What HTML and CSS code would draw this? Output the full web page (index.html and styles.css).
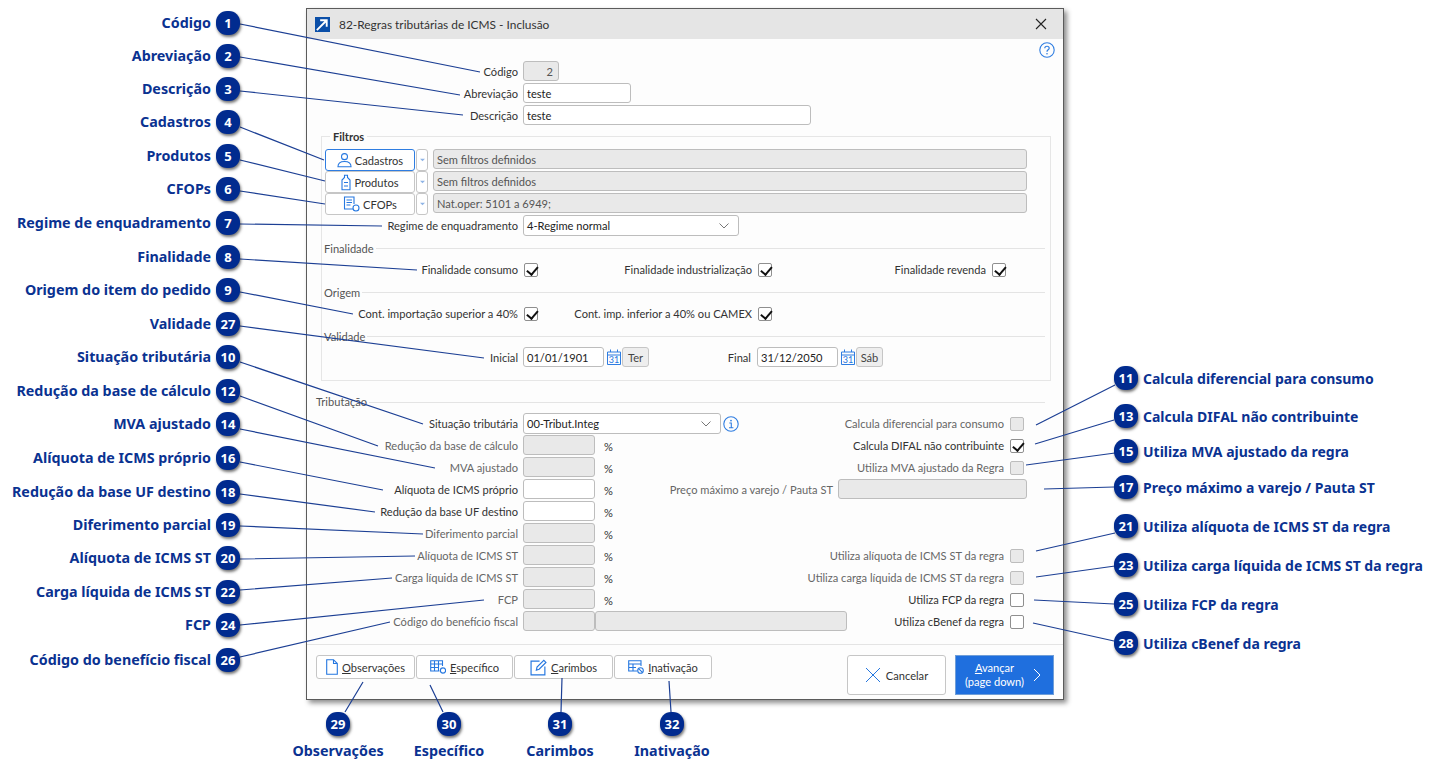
FILE: index.html
```html
<!DOCTYPE html>
<html lang="pt-BR">
<head>
<meta charset="utf-8">
<title>82-Regras tributárias de ICMS - Inclusão</title>
<link rel="stylesheet" href="styles.css">
</head>
<body>
<main class="canvas">
  <section class="dialog">
    <header class="titlebar">
      <svg class="app-icon" viewBox="0 0 16 16"><rect width="16" height="16" fill="#0b4fa8"/><path d="M2 14 L12 4 M5.5 3.5 H12.5 V10.5" fill="none" stroke="#fff" stroke-width="2"/></svg>
      <span class="title">82-Regras tributárias de ICMS - Inclusão</span>
      <svg class="close" viewBox="0 0 12 12"><path d="M1 1 L11 11 M11 1 L1 11" stroke="#222" stroke-width="1.1"/></svg>
    </header>
    <div class="body">
      <div class="help-row">
        <svg class="help" viewBox="0 0 16 16"><circle cx="8" cy="8" r="7.2" fill="none" stroke="#2f7de1" stroke-width="1.1"/><path d="M5.8 6.2 C5.8 3.6 10.2 3.6 10.2 6.2 C10.2 7.9 8 7.8 8 9.7" fill="none" stroke="#2f7de1" stroke-width="1.2"/><circle cx="8" cy="11.8" r=".8" fill="#2f7de1"/></svg>
      </div>
      <div class="row"><label class="lbl lbl-top">Código</label><span class="input disabled w-code num">2</span></div>
      <div class="row"><label class="lbl lbl-top">Abreviação</label><span class="input w-abbr">teste</span></div>
      <div class="row"><label class="lbl lbl-top">Descrição</label><span class="input w-desc">teste</span></div>

      <div class="group">
        <div class="group-title">Filtros</div>
        <div class="row filter">
          <button class="btn btn-filter focus"><svg class="ico ico-user" viewBox="0 0 16 16"><circle cx="8" cy="4.4" r="3.2"/><path d="M1 15.3 C1 10.6 4 9.6 8 9.6 C12 9.6 15 10.6 15 15.3 Z"/></svg>Cadastros</button>
          <button class="btn-drop"><svg viewBox="0 0 6 4"><path d="M0 .5 H6 L3 3.5 Z" fill="#8fb4e6"/></svg></button>
          <span class="input disabled w-filter">Sem filtros definidos</span>
        </div>
        <div class="row filter">
          <button class="btn btn-filter"><svg class="ico ico-bottle" viewBox="0 0 10 16"><path d="M3.5 .7 H6.5 V3 L9 5.5 V15.3 H1 V5.5 L3.5 3 Z M3 8 H7 M3 11.5 H7"/></svg>Produtos</button>
          <button class="btn-drop"><svg viewBox="0 0 6 4"><path d="M0 .5 H6 L3 3.5 Z" fill="#8fb4e6"/></svg></button>
          <span class="input disabled w-filter">Sem filtros definidos</span>
        </div>
        <div class="row filter">
          <button class="btn btn-filter"><svg class="ico ico-doc" viewBox="0 0 16 16"><path d="M9.5 13 H1 V1 H10.5 V8 M3 4 H8.5 M3 6.5 H8.5 M3 9 H7"/><circle cx="12.5" cy="12" r="3"/></svg>CFOPs</button>
          <button class="btn-drop"><svg viewBox="0 0 6 4"><path d="M0 .5 H6 L3 3.5 Z" fill="#8fb4e6"/></svg></button>
          <span class="input disabled w-filter">Nat.oper: 5101 a 6949;</span>
        </div>
        <div class="row">
          <label class="lbl lbl-group">Regime de enquadramento</label>
          <span class="input select w-regime">4-Regime normal<svg class="chev" viewBox="0 0 10 6"><path d="M.5 .5 L5 5 L9.5 .5"/></svg></span>
        </div>
        <div class="section">Finalidade</div>
        <div class="row">
          <div class="cell cell-first"><label>Finalidade consumo</label><span class="check on"></span></div>
          <div class="cell"><label>Finalidade industrialização</label><span class="check on"></span></div>
          <div class="cell"><label>Finalidade revenda</label><span class="check on"></span></div>
        </div>
        <div class="section">Origem</div>
        <div class="row">
          <div class="cell cell-first"><label>Cont. importação superior a 40%</label><span class="check on"></span></div>
          <div class="cell"><label>Cont. imp. inferior a 40% ou CAMEX</label><span class="check on"></span></div>
        </div>
        <div class="section">Validade</div>
        <div class="row">
          <label class="lbl lbl-group">Inicial</label>
          <span class="input w-date">01/01/1901</span>
          <svg class="cal" viewBox="0 0 14 16"><path d="M.5 3 H13.5 V15.5 H.5 Z M.5 6 H13.5 M3.5 .5 V3 M10.5 .5 V3" fill="none" stroke="#2f7de1"/><text x="7" y="14" text-anchor="middle" class="cal-num">31</text></svg>
          <span class="weekday">Ter</span>
          <label class="lbl-final">Final</label>
          <span class="input w-date">31/12/2050</span>
          <svg class="cal" viewBox="0 0 14 16"><path d="M.5 3 H13.5 V15.5 H.5 Z M.5 6 H13.5 M3.5 .5 V3 M10.5 .5 V3" fill="none" stroke="#2f7de1"/><text x="7" y="14" text-anchor="middle" class="cal-num">31</text></svg>
          <span class="weekday">Sáb</span>
        </div>
      </div>

      <div class="section section-tax">Tributação</div>
      <div class="tax">
        <div class="row">
          <label class="lbl">Situação tributária</label>
          <span class="input select w-sit">00-Tribut.Integ<svg class="chev" viewBox="0 0 10 6"><path d="M.5 .5 L5 5 L9.5 .5"/></svg></span>
          <svg class="info" viewBox="0 0 16 16"><circle cx="8" cy="8" r="7.2" fill="none" stroke="#2f7de1" stroke-width="1.1"/><path d="M6.3 7 H8.3 V11.6 M6 11.8 H10.4" fill="none" stroke="#2f7de1" stroke-width="1.1"/><circle cx="8" cy="4.6" r=".9" fill="#2f7de1"/></svg>
          <div class="right"><label class="muted">Calcula diferencial para consumo</label><span class="check off"></span></div>
        </div>
        <div class="row">
          <label class="lbl muted">Redução da base de cálculo</label><span class="input disabled w-pct"></span><span class="pct">%</span>
          <div class="right"><label>Calcula DIFAL não contribuinte</label><span class="check on"></span></div>
        </div>
        <div class="row">
          <label class="lbl muted">MVA ajustado</label><span class="input disabled w-pct"></span><span class="pct">%</span>
          <div class="right"><label class="muted">Utiliza MVA ajustado da Regra</label><span class="check off"></span></div>
        </div>
        <div class="row">
          <label class="lbl">Alíquota de ICMS próprio</label><span class="input w-pct"></span><span class="pct">%</span>
          <div class="right right-field"><label class="muted">Preço máximo a varejo / Pauta ST</label><span class="input disabled w-max"></span></div>
        </div>
        <div class="row">
          <label class="lbl">Redução da base UF destino</label><span class="input w-pct"></span><span class="pct">%</span>
        </div>
        <div class="row">
          <label class="lbl muted">Diferimento parcial</label><span class="input disabled w-pct"></span><span class="pct">%</span>
        </div>
        <div class="row">
          <label class="lbl muted">Alíquota de ICMS ST</label><span class="input disabled w-pct"></span><span class="pct">%</span>
          <div class="right"><label class="muted">Utiliza alíquota de ICMS ST da regra</label><span class="check off"></span></div>
        </div>
        <div class="row">
          <label class="lbl muted">Carga líquida de ICMS ST</label><span class="input disabled w-pct"></span><span class="pct">%</span>
          <div class="right"><label class="muted">Utiliza carga líquida de ICMS ST da regra</label><span class="check off"></span></div>
        </div>
        <div class="row">
          <label class="lbl muted">FCP</label><span class="input disabled w-pct"></span><span class="pct">%</span>
          <div class="right"><label>Utiliza FCP da regra</label><span class="check"></span></div>
        </div>
        <div class="row">
          <label class="lbl muted">Código do benefício fiscal</label><span class="input disabled w-ben1"></span><span class="input disabled w-ben2"></span>
          <div class="right"><label>Utiliza cBenef da regra</label><span class="check"></span></div>
        </div>
      </div>
    </div>
    <footer class="footer">
      <button class="btn btn-foot w-obs"><svg class="ico ico-foot" viewBox="0 0 12 16"><path d="M.7 .7 H7.5 L11.3 4.5 V15.3 H.7 Z M7.5 .7 V4.5 H11.3"/></svg><span><u>O</u>bservações</span></button>
      <button class="btn btn-foot w-esp"><svg class="ico ico-foot2" viewBox="0 0 16 14"><path d="M9.5 11 H.7 V.7 H12.5 V6 M.7 4 H12.5 M.7 7.5 H9 M4.5 .7 V11 M8.5 .7 V11"/><circle cx="13" cy="10.5" r="2.6"/></svg><span><u>E</u>specífico</span></button>
      <button class="btn btn-foot w-car"><svg class="ico ico-foot3" viewBox="0 0 16 16"><path d="M9 2 H1 V15 H14 V7"/><path d="M6 10.5 L6.6 7.6 L13 1.2 L15 3.2 L8.6 9.6 Z"/></svg><span><u>C</u>arimbos</span></button>
      <button class="btn btn-foot w-ina"><svg class="ico ico-foot2" viewBox="0 0 16 14"><path d="M9 11 H.7 V.7 H13 V6 M.7 4 H13 M.7 7.5 H8 M5 4 V11"/><circle cx="12.5" cy="10.5" r="2.8"/><path d="M10.6 8.6 L14.4 12.4"/></svg><span><u>I</u>nativação</span></button>
      <div class="footer-spacer"></div>
      <button class="btn btn-cancel"><svg class="ico-x" viewBox="0 0 16 16"><path d="M1 1 L15 15 M15 1 L1 15"/></svg>Cancelar</button>
      <button class="btn-next"><span class="next-text"><span><u>A</u>vançar</span><span>(page down)</span></span><svg class="ico-next" viewBox="0 0 8 14"><path d="M1 1 L7 7 L1 13"/></svg></button>
    </footer>
  </section>

  <svg class="leaders" viewBox="0 0 1439 778">
    <path d="M240 24 L480 72 M240 57 L460 95 M240 91 L463 115 M240 127 L324 160 M240 160 L325 181 M240 191 L325 204 M240 224 L382 226 M240 259 L417 270 M240 292 L353 314 M240 326 L484 358 M240 362 L423 424 M240 396 L378 446 M240 429 L435 468 M240 462 L383 490 M240 494 L375 512 M240 526 L423 534 M240 559 L415 556 M240 590 L392 578 M240 625 L484 600 M240 657 L390 622"/>
    <path d="M1115 385 L1036 425 M1114 420 L1035 444 M1115 453 L1026 465 M1114 487 L1044 489 M1115 533 L1036 551 M1115 566 L1036 577 M1114 604 L1034 600 M1114 641 L1033 623"/>
    <path d="M345 712 L363 682 M443 712 L430 685 M561 712 L562 678 M671 712 L669 681"/>
  </svg>

  <div class="co co-l y23"><span class="co-t">Código</span><b class="pin">1</b></div>
  <div class="co co-l y56"><span class="co-t">Abreviação</span><b class="pin">2</b></div>
  <div class="co co-l y89"><span class="co-t">Descrição</span><b class="pin">3</b></div>
  <div class="co co-l y122"><span class="co-t">Cadastros</span><b class="pin">4</b></div>
  <div class="co co-l y156"><span class="co-t">Produtos</span><b class="pin">5</b></div>
  <div class="co co-l y189"><span class="co-t">CFOPs</span><b class="pin">6</b></div>
  <div class="co co-l y223"><span class="co-t">Regime de enquadramento</span><b class="pin">7</b></div>
  <div class="co co-l y257"><span class="co-t">Finalidade</span><b class="pin">8</b></div>
  <div class="co co-l y290"><span class="co-t">Origem do item do pedido</span><b class="pin">9</b></div>
  <div class="co co-l y324"><span class="co-t">Validade</span><b class="pin">27</b></div>
  <div class="co co-l y357"><span class="co-t">Situação tributária</span><b class="pin">10</b></div>
  <div class="co co-l y391"><span class="co-t">Redução da base de cálculo</span><b class="pin">12</b></div>
  <div class="co co-l y424"><span class="co-t">MVA ajustado</span><b class="pin">14</b></div>
  <div class="co co-l y458"><span class="co-t">Alíquota de ICMS próprio</span><b class="pin">16</b></div>
  <div class="co co-l y492"><span class="co-t">Redução da base UF destino</span><b class="pin">18</b></div>
  <div class="co co-l y525"><span class="co-t">Diferimento parcial</span><b class="pin">19</b></div>
  <div class="co co-l y558"><span class="co-t">Alíquota de ICMS ST</span><b class="pin">20</b></div>
  <div class="co co-l y592"><span class="co-t">Carga líquida de ICMS ST</span><b class="pin">22</b></div>
  <div class="co co-l y625"><span class="co-t">FCP</span><b class="pin">24</b></div>
  <div class="co co-l y660"><span class="co-t">Código do benefício fiscal</span><b class="pin">26</b></div>

  <div class="co co-r y378"><b class="pin">11</b><span class="co-t">Calcula diferencial para consumo</span></div>
  <div class="co co-r y416"><b class="pin">13</b><span class="co-t">Calcula DIFAL não contribuinte</span></div>
  <div class="co co-r y451"><b class="pin">15</b><span class="co-t">Utiliza MVA ajustado da regra</span></div>
  <div class="co co-r y487"><b class="pin">17</b><span class="co-t">Preço máximo a varejo / Pauta ST</span></div>
  <div class="co co-r y526"><b class="pin">21</b><span class="co-t">Utiliza alíquota de ICMS ST da regra</span></div>
  <div class="co co-r y565"><b class="pin">23</b><span class="co-t">Utiliza carga líquida de ICMS ST da regra</span></div>
  <div class="co co-r y604"><b class="pin">25</b><span class="co-t">Utiliza FCP da regra</span></div>
  <div class="co co-r y643"><b class="pin">28</b><span class="co-t">Utiliza cBenef da regra</span></div>

  <div class="co-b x338"><b class="pin">29</b><span class="co-t">Observações</span></div>
  <div class="co-b x449"><b class="pin">30</b><span class="co-t">Específico</span></div>
  <div class="co-b x560"><b class="pin">31</b><span class="co-t">Carimbos</span></div>
  <div class="co-b x672"><b class="pin">32</b><span class="co-t">Inativação</span></div>
</main>
</body>
</html>
```
FILE: styles.css
```css
* { box-sizing: border-box; }
html, body { margin: 0; padding: 0; background: #fff; }
body { font-family: "Lato", "Noto Sans", sans-serif; font-size: 11.1px; color: #333; overflow: hidden; }
.canvas { position: relative; width: 1439px; height: 778px; overflow: hidden; }

/* Dialog window */
.dialog { position: absolute; left: 306px; top: 8px; width: 758px; height: 692px; background: #fdfdfd; border: 1px solid #5b5b5b; display: flex; flex-direction: column; box-shadow: 3px 3px 5px rgba(0,0,0,.45); }
.titlebar { height: 30px; flex: none; background: #e5e5e5; display: flex; align-items: center; padding: 0 16px 0 8px; }
.app-icon { width: 15px; height: 15px; margin-right: 9px; }
.title { font-size: 11.9px; color: #333; flex: 1; }
.close { width: 12px; height: 12px; margin-top: -1px; }
.body { flex: 1; position: relative; padding: 0 0 0 9px; }
.help-row { height: 22px; display: flex; justify-content: flex-end; padding: 3px 8px 0 0; }
.help { width: 16px; height: 16px; }

/* Rows and labels */
.row { height: 22px; display: flex; align-items: flex-start; }
label { white-space: nowrap; line-height: 21px; }
.lbl { width: 202px; margin-right: 5px; text-align: right; flex: none; }
.lbl-group { width: 193px; }
.muted { color: #666; }
.input { display: block; height: 20px; line-height: 19px; border: 1px solid #bdbdbd; border-radius: 3px; background: #fff; padding: 0 3px; color: #222; flex: none; white-space: nowrap; position: relative; }
.input.disabled { background: #e9e9e9; color: #555; }
.num { text-align: right; padding-right: 5px; }
.w-code { width: 36px; }
.w-abbr { width: 108px; }
.w-desc { width: 288px; }
.w-filter { width: 594px; margin-left: 5px; }
.w-regime { width: 216px; height: 21px; }
.w-date { width: 81px; }
.w-sit { width: 198px; height: 21px; }
.w-pct { width: 72px; }
.w-max { width: 189px; }
.w-ben1 { width: 72px; }
.w-ben2 { width: 252px; }
.select { color: #222; line-height: 19px; }
.chev { position: absolute; right: 9px; top: 7px; width: 10px; height: 6px; fill: none; stroke: #777; }
.info { width: 16px; height: 16px; margin: 3px 0 0 2px; flex: none; }
.pct { width: 20px; margin-left: 4px; padding-left: 5px; line-height: 23px; flex: none; }

/* Filter group */
.group { width: 730px; height: 245px; margin: 9px 0 0 5px; border: 1px solid #e6e6e6; padding: 0 0 0 3px; }
.group-title { width: fit-content; height: 14px; margin: -7px 0 5px 5px; padding: 0 3px; background: #fdfdfd; font-weight: 700; line-height: 14px; color: #333; }
.filter { align-items: flex-start; }
.btn { font: inherit; color: #333; background: #fff; border: 1px solid #c6c6c6; border-radius: 3px; display: flex; align-items: center; justify-content: center; padding: 0; cursor: default; }
.btn-filter { width: 90px; height: 22px; flex: none; gap: 3px; }
.btn-filter.focus { border-color: #2f7de1; }
.btn-drop { width: 12px; height: 22px; margin-left: 1px; padding: 0; background: #fff; border: 1px solid #c6c6c6; border-radius: 3px; flex: none; display: flex; align-items: center; justify-content: center; }
.btn-drop svg { width: 5px; height: 4px; }
.ico { fill: none; stroke: #2577e0; stroke-width: 1.1; flex: none; }
.ico-user { width: 15px; height: 16px; }
.ico-bottle { width: 10px; height: 17px; }
.ico-doc { width: 17px; height: 16px; }
.section { height: 22px; line-height: 23px; color: #555; display: flex; align-items: center; gap: 2px; width: 721px; }
.section::after { content: ""; flex: 1; height: 1px; background: #e4e4e4; margin-top: 1px; }
.group .section { margin-left: -1px; }
.section-tax { height: 32px; width: 729px; align-items: flex-end; line-height: 22px; }
.section-tax::after { margin-bottom: 10px; }
.cell { width: 234px; display: flex; justify-content: flex-end; align-items: flex-start; gap: 6px; flex: none; }
.cell-first { width: 213px; }
.check { width: 14px; height: 14px; margin-top: 4px; border: 1px solid #8f8f8f; border-radius: 2px; background: #fff; flex: none; display: block; position: relative; }
.check.off { background: #e9e9e9; border-color: #bdbdbd; }
.check.on::after { content: ""; position: absolute; left: 3.5px; top: 0; width: 4.5px; height: 9px; border: solid #111; border-width: 0 2px 2px 0; transform: rotate(40deg); }
.cal { width: 14px; height: 16px; margin: 2px 1px 0 3px; flex: none; }
.cal-num { font-size: 9px; fill: #2577e0; }
.weekday { width: 27px; height: 20px; line-height: 19px; text-align: center; border: 1px solid #c6c6c6; border-radius: 3px; background: #eee; color: #444; flex: none; }
.lbl-final { width: 102px; margin-right: 6px; text-align: right; flex: none; }

/* Tax rows */
.tax { width: 711px; }
.right { margin-left: auto; display: flex; align-items: flex-start; gap: 6px; padding-right: 3px; }
.right-field { padding-right: 0; gap: 5px; }

/* Footer */
.footer { flex: none; height: 55px; border-top: 1px solid #e4e4e4; display: flex; align-items: flex-start; padding: 10px 9px 0 9px; }
.btn-foot { height: 24px; flex: none; gap: 4px; }
.btn-foot + .btn-foot { margin-left: 1px; }
.w-obs { width: 99px; }
.w-esp { width: 97px; }
.w-car { width: 99px; }
.w-ina { width: 98px; }
.ico-foot { width: 12px; height: 16px; }
.ico-foot2 { width: 16px; height: 14px; }
.ico-foot3 { width: 17px; height: 17px; }
.footer-spacer { flex: 1; }
.btn-cancel { width: 99px; height: 40px; gap: 5px; }
.ico-x { width: 16px; height: 16px; stroke: #2577e0; fill: none; flex: none; }
.btn-next { font: inherit; color: #fff; width: 99px; height: 40px; margin-left: 9px; background: #1f6fde; border: 1px solid #6f9ed8; display: flex; align-items: center; padding: 0 0 0 8px; }
.next-text { width: 61px; display: flex; flex-direction: column; align-items: center; line-height: 14px; flex: none; }
.ico-next { width: 8px; height: 14px; margin-left: 8px; fill: none; stroke: #fff; flex: none; }

/* Callouts */
.leaders { position: absolute; left: 0; top: 0; width: 1439px; height: 778px; fill: none; stroke: #1c3f94; stroke-width: 1.2; pointer-events: none; }
.co { position: absolute; display: flex; align-items: center; gap: 5px; height: 24px; margin-top: -12px; white-space: nowrap; }
.co-l { left: 0; width: 240px; justify-content: flex-end; }
.co-r { left: 1114px; }
.co-b { position: absolute; top: 712px; width: 140px; margin-left: -70px; display: flex; flex-direction: column; align-items: center; gap: 5px; }
.co-t { font-family: "Noto Sans", "Open Sans", sans-serif; font-size: 14.3px; font-weight: 700; color: #0a3291; line-height: 20px; }
.co-r .co-t { font-size: 14px; padding-top: 1px; }
.pin { width: 24px; height: 24px; border-radius: 11px; background: #012b8f; color: #fff; font-family: "Noto Sans", sans-serif; font-size: 13px; font-weight: 700; display: flex; align-items: center; justify-content: center; box-shadow: 1px 2px 3px rgba(0,0,0,.55); flex: none; }
.y23 { top: 23px; } .y56 { top: 56px; } .y89 { top: 89px; } .y122 { top: 122px; } .y156 { top: 156px; }
.y189 { top: 189px; } .y223 { top: 223px; } .y257 { top: 257px; } .y290 { top: 290px; } .y324 { top: 324px; }
.y357 { top: 357px; } .y391 { top: 391px; } .y424 { top: 424px; } .y458 { top: 458px; } .y492 { top: 492px; }
.y525 { top: 525px; } .y558 { top: 558px; } .y592 { top: 592px; } .y625 { top: 625px; } .y660 { top: 660px; }
.y378 { top: 378px; } .y416 { top: 416px; } .y451 { top: 451px; } .y487 { top: 487px; } .y526 { top: 526px; }
.y565 { top: 565px; } .y604 { top: 604px; } .y643 { top: 643px; }
.x338 { left: 338px; } .x449 { left: 449px; } .x560 { left: 560px; } .x672 { left: 672px; }
```
